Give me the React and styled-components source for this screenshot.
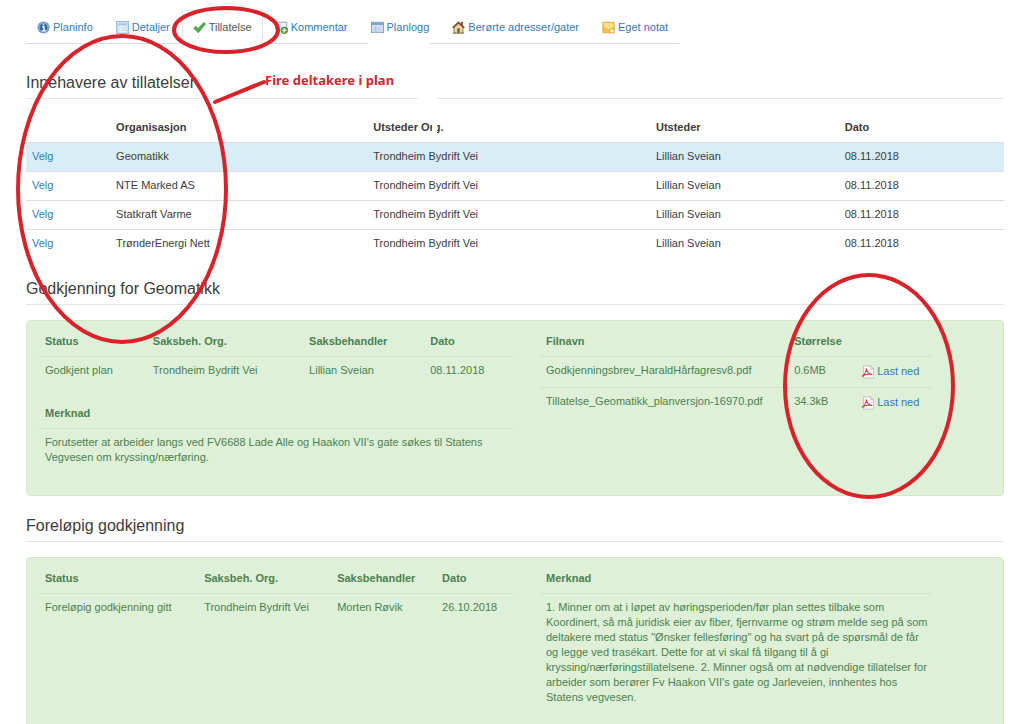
import styled, { createGlobalStyle } from "styled-components";

const GlobalStyle = createGlobalStyle`
	* {
		box-sizing: border-box;
	}

	body {
		margin: 0;
		background: #fff;
		color: #3c3c3c;
		font-family: "Liberation Sans", Arial, sans-serif;
		font-size: 11px;
		line-height: 15px;
	}

	a {
		color: #337ab7;
		text-decoration: none;
	}
`;

const Page = styled.div`
	position: relative;
	height: 100vh;
	overflow: hidden;
	padding: 10px 19px 0 26px;
`;

const Tabs = styled.nav`
	display: flex;
	width: fit-content;
	gap: 1px;
	border-bottom: 1px solid #ddd;
`;

const Tab = styled.a`
	display: flex;
	align-items: center;
	gap: 3px;
	height: 34px;
	padding: 0 10px;
	margin-bottom: -1px;
	border: 1px solid ${(p) => (p.$active ? "#e4e4e4" : "transparent")};
	border-bottom-color: ${(p) => (p.$active ? "#fff" : "transparent")};
	color: ${(p) => (p.$active ? "#555" : "#337ab7")};

	svg {
		width: 13px;
		height: 13px;
	}
`;

const Heading = styled.h2`
	margin: 0 0 15px;
	padding: ${(p) => p.$top}px 0 5px;
	border-bottom: 1px solid #e5e5e5;
	font-size: 16px;
	font-weight: 400;
	line-height: 20px;
`;

const Table = styled.table`
	width: 100%;
	table-layout: fixed;
	border-spacing: 0;

	th,
	td {
		padding: 6px 0 7px 6px;
		text-align: left;
		vertical-align: top;
	}

	td {
		border-top: 1px solid ${(p) => (p.$green ? "#d2e2cd" : "#ddd")};
	}
`;

const Row = styled.tr`
	background: ${(p) => (p.$selected ? "#d9edf7" : "transparent")};
`;

const Panel = styled.section`
	display: grid;
	grid-template-columns: 475fr 392fr 45fr;
	column-gap: 26px;
	min-height: ${(p) => p.$min}px;
	padding: 7px 0 22px 12px;
	border: 1px solid #d6e9c6;
	border-radius: 4px;
	background: #dff0d8;
	color: #4a8050;
`;

const Stack = styled.div`
	display: flex;
	flex-direction: column;
	gap: 15px;
`;

const Download = styled.a`
	display: flex;
	align-items: center;
	gap: 3px;
	height: 17px;

	svg {
		width: 13px;
		height: 14px;
	}
`;

const Marks = styled.svg`
	position: absolute;
	top: 0;
	left: 0;
	fill: none;
	stroke: #d8232a;
	stroke-width: 4;
	stroke-linecap: round;
	pointer-events: none;
`;

const Callout = styled.strong`
	position: absolute;
	top: 71px;
	left: 265px;
	color: #d8232a;
	font-family: "Noto Sans", sans-serif;
	font-size: 13px;
	line-height: 18px;
`;

const Eraser = styled.span`
	position: absolute;
	top: ${(p) => p.$y}px;
	left: ${(p) => p.$x}px;
	width: ${(p) => p.$w}px;
	height: ${(p) => p.$h}px;
	background: #fff;
`;

const InfoIcon = () => (
	<svg viewBox="0 0 16 16">
		<circle cx="8" cy="8" r="7.5" fill="#6f9ac8" />
		<circle cx="8" cy="8" r="5.5" fill="#376ca6" stroke="#a9c6e2" />
		<path d="M6.5 7H8.500V12M6.500 12H10.500M8 3.500V5.200" stroke="#fff" strokeWidth="1.800" />
	</svg>
);

const DetailIcon = () => (
	<svg viewBox="0 0 16 16">
		<rect x=".5" y=".5" width="15" height="15" fill="#c9def2" stroke="#8fb2d6" />
		<path d="M3 4H13M3 7H13M3 10H13M3 13H13M6 3V14" stroke="#f5faff" />
		<path d="M3 3H13V5H3Z" fill="#a5c3e4" />
	</svg>
);

const CheckIcon = () => (
	<svg viewBox="0 0 16 16">
		<path d="M1 9L3.500 6.500L6 9.500L13 2L15.500 3.500L6.500 14.500Z" fill="#4fae4a" stroke="#2f8a32" strokeWidth=".8" />
	</svg>
);

const CommentIcon = () => (
	<svg viewBox="0 0 16 16">
		<path d="M1 1.500H14.500V11H7L4 14V11H1Z" fill="#edf3fa" stroke="#829bb8" />
		<circle cx="11.500" cy="11.500" r="4" fill="#59a846" stroke="#3b7f31" />
		<path d="M11.500 9V14M9 11.500H14" stroke="#fff" strokeWidth="1.500" />
	</svg>
);

const LogIcon = () => (
	<svg viewBox="0 0 16 16">
		<rect x=".5" y="1.500" width="15" height="13" fill="#dfe9f5" stroke="#6f8eb5" />
		<path d="M1 2H15V5H1Z" fill="#7fa3d3" />
		<path d="M2 7.500H14M2 10H14M2 12.500H14M5.500 6V14" stroke="#a9c0de" />
	</svg>
);

const HouseIcon = () => (
	<svg viewBox="0 0 16 16">
		<path d="M11 1H13.500V6H11Z" fill="#a65637" />
		<path d="M2.500 8L8 3L13.500 8V15H2.500Z" fill="#f1d59c" stroke="#80613e" />
		<path d="M.8 8.500L8 1.800L15.200 8.500" fill="none" stroke="#765436" strokeWidth="2" />
		<path d="M6.500 9H9.500V15H6.500Z" fill="#705a4a" />
		<path d="M1 14.500H5M11 14.500H15" stroke="#6f9a58" strokeWidth="1.500" />
	</svg>
);

const NoteIcon = () => (
	<svg viewBox="0 0 16 16">
		<path d="M1 1.500H15V14.500H1Z" fill="#f3c04a" stroke="#dba93f" />
		<path d="M2 2.500H14V7L9 11L2 6Z" fill="#fbe08a" />
		<path d="M15 9.500V14.500H9L10 10Z" fill="#fff0bd" stroke="#dba93f" />
	</svg>
);

const PdfIcon = () => (
	<svg viewBox="0 0 16 16">
		<path d="M3 .5H12L15.500 4V15.500H3Z" fill="#fff" stroke="#b9b4b4" />
		<path d="M12 .5V4H15.500" fill="#ddd" stroke="#b9b4b4" />
		<path d="M1 13.500C4 11.500 6.500 8 6.500 3.500C7 8 10 10.500 14 11C9 10 4.500 11 1 13.500Z" fill="none" stroke="#c8494f" strokeWidth="1.300" />
	</svg>
);

const tabs = [
	["Planinfo", InfoIcon],
	["Detaljer", DetailIcon],
	["Tillatelse", CheckIcon],
	["Kommentar", CommentIcon],
	["Planlogg", LogIcon],
	["Berørte adresser/gater", HouseIcon],
	["Eget notat", NoteIcon],
];

const holders = ["Geomatikk", "NTE Marked AS", "Statkraft Varme", "TrønderEnergi Nett"];

const files = [
	["Godkjenningsbrev_HaraldHårfagresv8.pdf", "0.6MB"],
	["Tillatelse_Geomatikk_planversjon-16970.pdf", "34.3kB"],
];

function DataTable({ widths, head, rows, green, selected }) {
	return (
		<Table $green={green}>
			<colgroup>
				{widths.map((width, i) => (
					<col key={i} style={{ width: `${width}%` }} />
				))}
			</colgroup>
			<thead>
				<tr>
					{head.map((label, i) => (
						<th key={i}>{label}</th>
					))}
				</tr>
			</thead>
			<tbody>
				{rows.map((row, i) => (
					<Row key={i} $selected={i === selected}>
						{row.map((cell, j) => (
							<td key={j}>{cell}</td>
						))}
					</Row>
				))}
			</tbody>
		</Table>
	);
}

const approvalHead = ["Status", "Saksbeh. Org.", "Saksbehandler", "Dato"];

export default function App() {
	return (
		<Page>
			<GlobalStyle />
			<Tabs>
				{tabs.map(([label, Icon]) => (
					<Tab key={label} href="#" $active={label === "Tillatelse"}>
						<Icon />
						{label}
					</Tab>
				))}
			</Tabs>

			<Heading $top={29}>Innehavere av tillatelser</Heading>
			<DataTable
				widths={[8.6, 26.3, 28.9, 19.3, 16.9]}
				head={["", "Organisasjon", "Utsteder Org.", "Utsteder", "Dato"]}
				selected={0}
				rows={holders.map((name) => [
					<a href="#">Velg</a>,
					name,
					"Trondheim Bydrift Vei",
					"Lillian Sveian",
					"08.11.2018",
				])}
			/>

			<Heading $top={21}>Godkjenning for Geomatikk</Heading>
			<Panel $min={176}>
				<Stack>
					<DataTable
						green
						widths={[22.7, 32.9, 25.5, 18.9]}
						head={approvalHead}
						rows={[["Godkjent plan", "Trondheim Bydrift Vei", "Lillian Sveian", "08.11.2018"]]}
					/>
					<DataTable
						green
						widths={[100]}
						head={["Merknad"]}
						rows={[
							[
								"Forutsetter at arbeider langs ved FV6688 Lade Alle og Haakon VII's gate søkes til Statens Vegvesen om kryssing/nærføring.",
							],
						]}
					/>
				</Stack>
				<div>
					<DataTable
						green
						widths={[63.3, 17.1, 19.6]}
						head={["Filnavn", "Størrelse", ""]}
						rows={files.map(([name, size]) => [
							name,
							size,
							<Download href="#">
								<PdfIcon />
								Last ned
							</Download>,
						])}
					/>
				</div>
			</Panel>

			<Heading $top={20}>Foreløpig godkjenning</Heading>
			<Panel $min={176}>
				<div>
					<DataTable
						green
						widths={[33.5, 28, 22.1, 16.4]}
						head={approvalHead}
						rows={[
							["Foreløpig godkjenning gitt", "Trondheim Bydrift Vei", "Morten Røvik", "26.10.2018"],
						]}
					/>
				</div>
				<div>
					<DataTable
						green
						widths={[100]}
						head={["Merknad"]}
						rows={[
							[
								'1. Minner om at i løpet av høringsperioden/før plan settes tilbake som Koordinert, så må juridisk eier av fiber, fjernvarme og strøm melde seg på som deltakere med status "Ønsker fellesføring" og ha svart på de spørsmål de får og legge ved trasékart. Dette for at vi skal få tilgang til å gi kryssing/nærføringstillatelsene. 2. Minner også om at nødvendige tillatelser for arbeider som berører Fv Haakon VII\'s gate og Jarleveien, innhentes hos Statens vegvesen.',
							],
						]}
					/>
				</div>
			</Panel>

			<Eraser $x={368} $y={33} $w={62} $h={16} />
			<Eraser $x={418} $y={94} $w={19} $h={8} />
			<Eraser $x={432} $y={119} $w={5} $h={16} />
			<Marks width="1023" height="724">
				<ellipse cx="226" cy="30" rx="52" ry="22" />
				<ellipse cx="122" cy="189" rx="104" ry="153" />
				<ellipse cx="869" cy="386" rx="84" ry="111" />
				<path d="M215 102L264 82" />
			</Marks>
			<Callout>Fire deltakere i plan</Callout>
		</Page>
	);
}
